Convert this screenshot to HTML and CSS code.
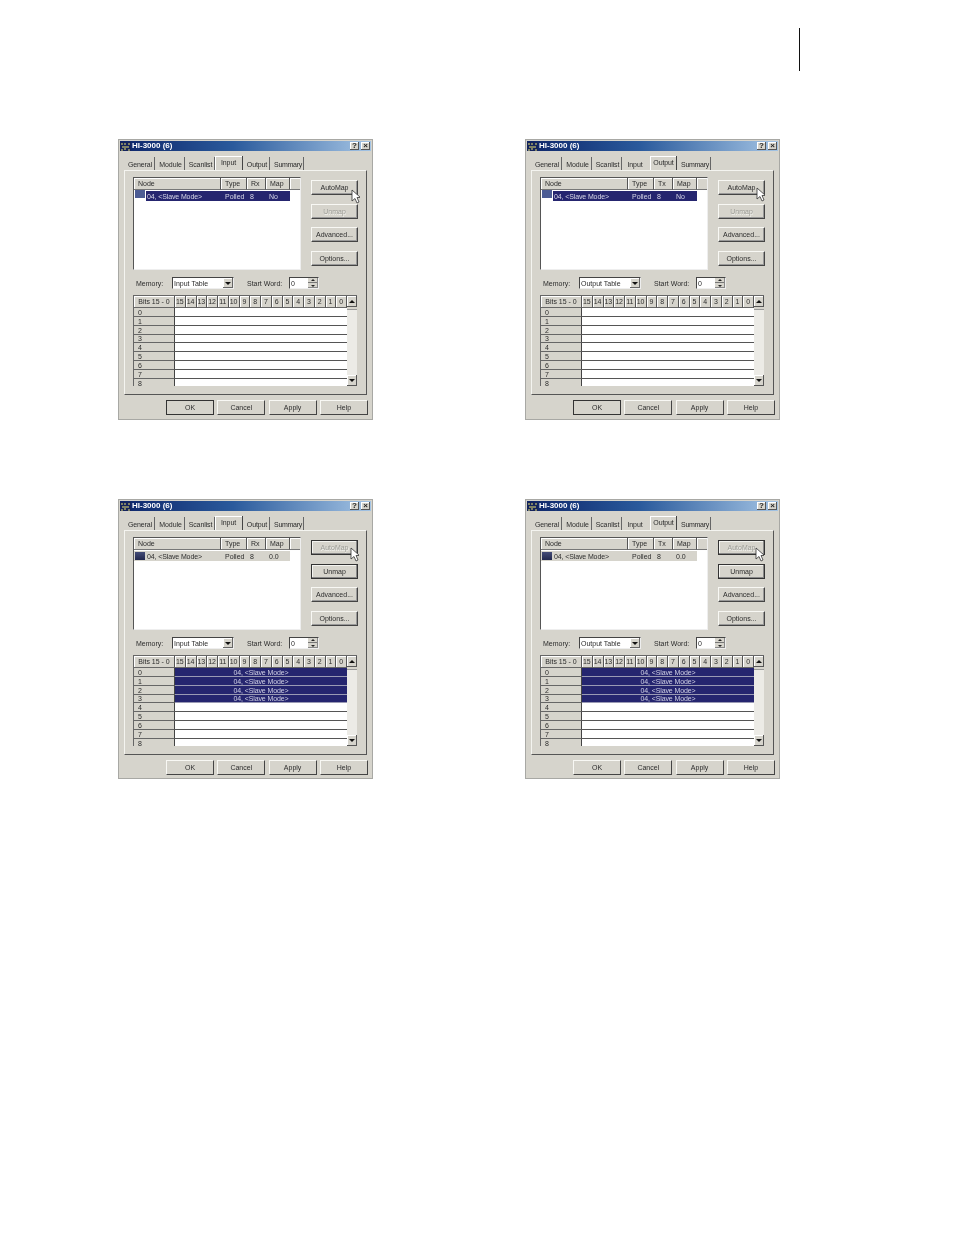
FILE: index.html
```html
<!DOCTYPE html>
<html lang="en">
<head>
<meta charset="utf-8">
<title>HI-3000 dialogs</title>
<link rel="stylesheet" href="styles.css">
</head>
<body>
<header class="topbar"><div class="rule"></div></header>
<main class="sheet">

<section class="dialog">
  <div class="title"><svg class="logo" viewBox="0 0 11 9"><rect width="11" height="9" fill="#14245c"/><path d="M1 2h2M5 1v2M8 2h2M2 5h7M1 8h2M5 6v2M8 8h2" stroke="#e8e070" stroke-width="1"/></svg><span class="title-text">HI-3000 (6)</span><span class="winbtns"><span class="winbtn">?</span><span class="winbtn">×</span></span></div>
  <div class="tabs"><span class="tab t1">General</span><span class="tab t2">Module</span><span class="tab t3">Scanlist</span><span class="tab t4 active">Input</span><span class="tab t5">Output</span><span class="tab t6">Summary</span></div>
  <div class="panel">
    <div class="top">
      <div class="list">
        <div class="lhead"><span class="lh c1">Node</span><span class="lh c2">Type</span><span class="lh c3">Rx</span><span class="lh c4">Map</span><span class="lh c5"></span></div>
        <div class="lrow sel"><span class="licon"></span><span class="lcell c1x">04, &lt;Slave Mode&gt;</span><span class="lcell c2">Polled</span><span class="lcell c3">8</span><span class="lcell c4">No</span></div>
      </div>
      <div class="side"><button class="btn">AutoMap</button><button class="btn off">Unmap</button><button class="btn">Advanced...</button><button class="btn">Options...</button></div>
    </div>
    <div class="mem"><span class="l1">Memory:</span><span class="select"><span class="val">Input Table</span><span class="drop"></span></span><span class="l2">Start Word:</span><span class="spin"><span class="val">0</span><span class="spinb"></span></span></div>
    <div class="bits">
      <div class="table">
        <span class="hc">Bits 15 - 0</span><span class="hb">15</span><span class="hb">14</span><span class="hb">13</span><span class="hb">12</span><span class="hb">11</span><span class="hb">10</span><span class="hb">9</span><span class="hb">8</span><span class="hb">7</span><span class="hb">6</span><span class="hb">5</span><span class="hb">4</span><span class="hb">3</span><span class="hb">2</span><span class="hb">1</span><span class="hb">0</span>
        <span class="rl">0</span><span class="rd"></span><span class="rl">1</span><span class="rd"></span><span class="rl">2</span><span class="rd"></span><span class="rl">3</span><span class="rd"></span><span class="rl">4</span><span class="rd"></span><span class="rl">5</span><span class="rd"></span><span class="rl">6</span><span class="rd"></span><span class="rl">7</span><span class="rd"></span><span class="rl">8</span><span class="rd"></span>
      </div>
      <div class="scroll"><span class="sb up"></span><span class="thumb"></span><span class="track"></span><span class="sb down"></span></div>
    </div>
  </div>
  <div class="actions"><button class="btn act def">OK</button><button class="btn act">Cancel</button><button class="btn act">Apply</button><button class="btn act">Help</button></div>
  <svg class="cursor" viewBox="0 0 9 15"><path d="M1 1v11l3-2.500 2 4.500 2-1-2-4.500h3.500z" fill="#fff" stroke="#333" stroke-width=".8"/></svg>
</section>

<section class="dialog">
  <div class="title"><svg class="logo" viewBox="0 0 11 9"><rect width="11" height="9" fill="#14245c"/><path d="M1 2h2M5 1v2M8 2h2M2 5h7M1 8h2M5 6v2M8 8h2" stroke="#e8e070" stroke-width="1"/></svg><span class="title-text">HI-3000 (6)</span><span class="winbtns"><span class="winbtn">?</span><span class="winbtn">×</span></span></div>
  <div class="tabs"><span class="tab t1">General</span><span class="tab t2">Module</span><span class="tab t3">Scanlist</span><span class="tab t4 plain">Input</span><span class="tab t5 active">Output</span><span class="tab t6">Summary</span></div>
  <div class="panel">
    <div class="top">
      <div class="list">
        <div class="lhead"><span class="lh c1">Node</span><span class="lh c2">Type</span><span class="lh c3">Tx</span><span class="lh c4">Map</span><span class="lh c5"></span></div>
        <div class="lrow sel"><span class="licon"></span><span class="lcell c1x">04, &lt;Slave Mode&gt;</span><span class="lcell c2">Polled</span><span class="lcell c3">8</span><span class="lcell c4">No</span></div>
      </div>
      <div class="side"><button class="btn">AutoMap</button><button class="btn off">Unmap</button><button class="btn">Advanced...</button><button class="btn">Options...</button></div>
    </div>
    <div class="mem"><span class="l1">Memory:</span><span class="select"><span class="val">Output Table</span><span class="drop"></span></span><span class="l2">Start Word:</span><span class="spin"><span class="val">0</span><span class="spinb"></span></span></div>
    <div class="bits">
      <div class="table">
        <span class="hc">Bits 15 - 0</span><span class="hb">15</span><span class="hb">14</span><span class="hb">13</span><span class="hb">12</span><span class="hb">11</span><span class="hb">10</span><span class="hb">9</span><span class="hb">8</span><span class="hb">7</span><span class="hb">6</span><span class="hb">5</span><span class="hb">4</span><span class="hb">3</span><span class="hb">2</span><span class="hb">1</span><span class="hb">0</span>
        <span class="rl">0</span><span class="rd"></span><span class="rl">1</span><span class="rd"></span><span class="rl">2</span><span class="rd"></span><span class="rl">3</span><span class="rd"></span><span class="rl">4</span><span class="rd"></span><span class="rl">5</span><span class="rd"></span><span class="rl">6</span><span class="rd"></span><span class="rl">7</span><span class="rd"></span><span class="rl">8</span><span class="rd"></span>
      </div>
      <div class="scroll"><span class="sb up"></span><span class="thumb"></span><span class="track"></span><span class="sb down"></span></div>
    </div>
  </div>
  <div class="actions"><button class="btn act def">OK</button><button class="btn act">Cancel</button><button class="btn act">Apply</button><button class="btn act">Help</button></div>
  <svg class="cursor right" viewBox="0 0 9 15"><path d="M1 1v11l3-2.500 2 4.500 2-1-2-4.500h3.500z" fill="#fff" stroke="#333" stroke-width=".8"/></svg>
</section>

<section class="dialog short">
  <div class="title"><svg class="logo" viewBox="0 0 11 9"><rect width="11" height="9" fill="#14245c"/><path d="M1 2h2M5 1v2M8 2h2M2 5h7M1 8h2M5 6v2M8 8h2" stroke="#e8e070" stroke-width="1"/></svg><span class="title-text">HI-3000 (6)</span><span class="winbtns"><span class="winbtn">?</span><span class="winbtn">×</span></span></div>
  <div class="tabs"><span class="tab t1">General</span><span class="tab t2">Module</span><span class="tab t3">Scanlist</span><span class="tab t4 active">Input</span><span class="tab t5">Output</span><span class="tab t6">Summary</span></div>
  <div class="panel">
    <div class="top">
      <div class="list">
        <div class="lhead"><span class="lh c1">Node</span><span class="lh c2">Type</span><span class="lh c3">Rx</span><span class="lh c4">Map</span><span class="lh c5"></span></div>
        <div class="lrow mapped"><span class="licon"></span><span class="lcell c1x">04, &lt;Slave Mode&gt;</span><span class="lcell c2">Polled</span><span class="lcell c3">8</span><span class="lcell c4">0.0</span></div>
      </div>
      <div class="side"><button class="btn off focus">AutoMap</button><button class="btn focus">Unmap</button><button class="btn">Advanced...</button><button class="btn">Options...</button></div>
    </div>
    <div class="mem"><span class="l1">Memory:</span><span class="select"><span class="val">Input Table</span><span class="drop"></span></span><span class="l2">Start Word:</span><span class="spin"><span class="val">0</span><span class="spinb"></span></span></div>
    <div class="bits">
      <div class="table">
        <span class="hc">Bits 15 - 0</span><span class="hb">15</span><span class="hb">14</span><span class="hb">13</span><span class="hb">12</span><span class="hb">11</span><span class="hb">10</span><span class="hb">9</span><span class="hb">8</span><span class="hb">7</span><span class="hb">6</span><span class="hb">5</span><span class="hb">4</span><span class="hb">3</span><span class="hb">2</span><span class="hb">1</span><span class="hb">0</span>
        <span class="rl">0</span><span class="rd on">04, &lt;Slave Mode&gt;</span><span class="rl">1</span><span class="rd on">04, &lt;Slave Mode&gt;</span><span class="rl">2</span><span class="rd on">04, &lt;Slave Mode&gt;</span><span class="rl">3</span><span class="rd on">04, &lt;Slave Mode&gt;</span><span class="rl">4</span><span class="rd"></span><span class="rl">5</span><span class="rd"></span><span class="rl">6</span><span class="rd"></span><span class="rl">7</span><span class="rd"></span><span class="rl">8</span><span class="rd"></span>
      </div>
      <div class="scroll"><span class="sb up"></span><span class="thumb"></span><span class="track"></span><span class="sb down"></span></div>
    </div>
  </div>
  <div class="actions"><button class="btn act">OK</button><button class="btn act">Cancel</button><button class="btn act">Apply</button><button class="btn act">Help</button></div>
  <svg class="cursor low" viewBox="0 0 9 15"><path d="M1 1v11l3-2.500 2 4.500 2-1-2-4.500h3.500z" fill="#fff" stroke="#333" stroke-width=".8"/></svg>
</section>

<section class="dialog short">
  <div class="title"><svg class="logo" viewBox="0 0 11 9"><rect width="11" height="9" fill="#14245c"/><path d="M1 2h2M5 1v2M8 2h2M2 5h7M1 8h2M5 6v2M8 8h2" stroke="#e8e070" stroke-width="1"/></svg><span class="title-text">HI-3000 (6)</span><span class="winbtns"><span class="winbtn">?</span><span class="winbtn">×</span></span></div>
  <div class="tabs"><span class="tab t1">General</span><span class="tab t2">Module</span><span class="tab t3">Scanlist</span><span class="tab t4 plain">Input</span><span class="tab t5 active">Output</span><span class="tab t6">Summary</span></div>
  <div class="panel">
    <div class="top">
      <div class="list">
        <div class="lhead"><span class="lh c1">Node</span><span class="lh c2">Type</span><span class="lh c3">Tx</span><span class="lh c4">Map</span><span class="lh c5"></span></div>
        <div class="lrow mapped"><span class="licon"></span><span class="lcell c1x">04, &lt;Slave Mode&gt;</span><span class="lcell c2">Polled</span><span class="lcell c3">8</span><span class="lcell c4">0.0</span></div>
      </div>
      <div class="side"><button class="btn off focus">AutoMap</button><button class="btn focus">Unmap</button><button class="btn">Advanced...</button><button class="btn">Options...</button></div>
    </div>
    <div class="mem"><span class="l1">Memory:</span><span class="select"><span class="val">Output Table</span><span class="drop"></span></span><span class="l2">Start Word:</span><span class="spin"><span class="val">0</span><span class="spinb"></span></span></div>
    <div class="bits">
      <div class="table">
        <span class="hc">Bits 15 - 0</span><span class="hb">15</span><span class="hb">14</span><span class="hb">13</span><span class="hb">12</span><span class="hb">11</span><span class="hb">10</span><span class="hb">9</span><span class="hb">8</span><span class="hb">7</span><span class="hb">6</span><span class="hb">5</span><span class="hb">4</span><span class="hb">3</span><span class="hb">2</span><span class="hb">1</span><span class="hb">0</span>
        <span class="rl">0</span><span class="rd on">04, &lt;Slave Mode&gt;</span><span class="rl">1</span><span class="rd on">04, &lt;Slave Mode&gt;</span><span class="rl">2</span><span class="rd on">04, &lt;Slave Mode&gt;</span><span class="rl">3</span><span class="rd on">04, &lt;Slave Mode&gt;</span><span class="rl">4</span><span class="rd"></span><span class="rl">5</span><span class="rd"></span><span class="rl">6</span><span class="rd"></span><span class="rl">7</span><span class="rd"></span><span class="rl">8</span><span class="rd"></span>
      </div>
      <div class="scroll"><span class="sb up"></span><span class="thumb"></span><span class="track"></span><span class="sb down"></span></div>
    </div>
  </div>
  <div class="actions"><button class="btn act">OK</button><button class="btn act">Cancel</button><button class="btn act">Apply</button><button class="btn act">Help</button></div>
  <svg class="cursor low right" viewBox="0 0 9 15"><path d="M1 1v11l3-2.500 2 4.500 2-1-2-4.500h3.500z" fill="#fff" stroke="#333" stroke-width=".8"/></svg>
</section>

</main>
</body>
</html>
```

FILE: styles.css
```css
* { box-sizing: border-box; }
html, body { margin: 0; background: #fff; }
body { width: 954px; height: 1235px; overflow: hidden; font: 7px/1 "Liberation Sans", Arial, sans-serif; color: #2c2c2c; }

.topbar { height: 71px; padding: 28px 0 0 799px; }
.rule { width: 1px; height: 43px; background: #111; }

.sheet { display: grid; grid-template-columns: 255px 255px; column-gap: 152px; row-gap: 79px; padding: 68px 0 0 118px; align-items: start; }

.dialog { position: relative; width: 255px; height: 281px; background: #d6d4cc; padding: 2px 2px 0; box-shadow: inset 0 0 0 1px #a8a8a4; filter: blur(.45px); }
.dialog.short { height: 280px; }

.title { display: flex; align-items: center; height: 10px; background: linear-gradient(90deg, #0c2468 0%, #2a5a9c 45%, #a4c4e4 100%); color: #fff; }
.logo { width: 11px; height: 9px; flex: none; }
.title-text { margin-left: 1px; font-size: 8px; font-weight: 700; }
.winbtns { display: flex; gap: 2px; margin-left: auto; margin-right: 1px; }
.winbtn { width: 9px; height: 8px; background: #d6d4cc; color: #222; font-size: 8px; line-height: 8px; font-weight: 700; text-align: center; box-shadow: inset -1px -1px 0 #555, inset 1px 1px 0 #fff; }

.tabs { display: flex; height: 13px; margin: 6px 0 0 4px; letter-spacing: -.1px; }
.tab { display: flex; align-items: center; justify-content: center; height: 13px; padding: 1px 0 0 2px; border-right: 1px solid #666; }
.t1 { width: 31px; }
.t2 { width: 30px; }
.t3 { width: 30px; }
.t4 { width: 28px; }
.t5 { width: 27px; }
.t6 { width: 34px; padding-left: 3px; letter-spacing: -.3px; }
.tab.plain { border-right: 0; padding: 1px 2px 0 0; }
.tab.t4.active { padding: 0 0 1px; }
.tab.active { height: 14px; margin-top: -1px; padding: 0 0 1px 1px; background: #d6d4cc; box-shadow: inset 1px 1px 0 #fff; position: relative; z-index: 1; border-right: 1px solid #444; }

.panel { width: 243px; height: 225px; margin-left: 4px; padding: 6px 0 0 8px; border-top: 1px solid #f4f4f0; border-left: 1px solid #f4f4f0; border-right: 1px solid #555; border-bottom: 1px solid #555; }

.top { display: flex; gap: 10px; }
.list { width: 168px; height: 93px; background: #fff; border-top: 1px solid #555; border-left: 1px solid #555; border-right: 1px solid #eee; border-bottom: 1px solid #eee; }
.lhead { display: flex; height: 12px; background: #d6d4cc; }
.lh { display: flex; align-items: center; padding-left: 4px; border-right: 1px solid #555; border-bottom: 1px solid #777; box-shadow: inset 1px 1px 0 #fff; }
.c1 { width: 87px; }
.c2 { width: 26px; }
.c3 { width: 19px; }
.c4 { width: 24px; }
.c5 { width: 10px; border-right: 0; }
.lrow { display: flex; align-items: center; height: 10px; margin-top: 1px; width: 156px; }
.licon { width: 10px; height: 8px; margin: 0 1px 0 1px; flex: none; background: linear-gradient(#444c78, #22284e); }
.lcell { display: block; padding-left: 4px; }
.c1x { width: 75px; padding-left: 1px; letter-spacing: -.12px; }
.lrow .c2 { width: 26px; }
.lrow .c3 { width: 19px; padding-left: 3px; }
.lrow .c4 { width: 24px; padding-left: 3px; }
.lrow.sel { background: linear-gradient(90deg, #fff 12px, #25256f 12px); color: #d8d8e8; }
.lrow.sel .licon { background: #4c5c94; margin-top: -4px; }
.lrow.mapped { background: #d6d4cc; }

.side { display: flex; flex-direction: column; gap: 8.7px; padding-top: 3px; width: 47px; }
.btn { display: block; width: 47px; height: 15px; padding: 0; font: 7px/1 "Liberation Sans", Arial, sans-serif; color: #2c2c2c; background: #d6d4cc; border: 0; border-top: 1px solid #f8f8f4; border-left: 1px solid #f8f8f4; border-right: 1px solid #444; border-bottom: 1px solid #444; box-shadow: inset -1px -1px 0 #999; }
.btn.off { color: #9a9a94; text-shadow: .5px .5px 0 #f4f4f0; }
.btn.focus { border: 1px solid #333; box-shadow: inset -1px -1px 0 #888, inset 1px 1px 0 #f4f4f0; }

.mem { display: flex; align-items: center; height: 12px; margin-top: 7px; padding-left: 3px; }
.l1 { width: 36px; }
.l2 { width: 42px; margin-left: 13px; }
.select, .spin { display: flex; align-items: center; height: 12px; background: #fff; border-top: 1px solid #444; border-left: 1px solid #444; border-right: 1px solid #eee; border-bottom: 1px solid #eee; }
.select { width: 62px; }
.spin { width: 30px; }
.val { padding-left: 1px; flex: 1; }
.drop { position: relative; width: 10px; height: 10px; background: #d6d4cc; box-shadow: inset -1px -1px 0 #666, inset 1px 1px 0 #fff; }
.drop::after { content: ""; position: absolute; left: 2px; top: 4px; border: 3px solid transparent; border-top: 3px solid #111; border-bottom: 0; }
.spinb { position: relative; width: 10px; height: 10px; background: linear-gradient(#d6d4cc 45%, #777 45%, #777 55%, #d6d4cc 55%); box-shadow: inset -1px -1px 0 #888; }
.spinb::before { content: ""; position: absolute; left: 3px; top: 1px; border: 2px solid transparent; border-bottom: 2px solid #222; border-top: 0; }
.spinb::after { content: ""; position: absolute; left: 3px; top: 7px; border: 2px solid transparent; border-top: 2px solid #222; border-bottom: 0; }

.bits { display: flex; width: 224px; height: 91px; margin-top: 6px; border-top: 1px solid #666; border-left: 1px solid #666; }
.table { display: grid; grid-template-columns: 41px repeat(16, 10.75px); grid-template-rows: 12px repeat(9, 8.85px); width: 213px; height: 90px; overflow: hidden; background: #fff; }
.hc, .hb { display: flex; align-items: center; justify-content: center; background: #d6d4cc; border-right: 1px solid #555; border-bottom: 1px solid #666; box-shadow: inset 1px 1px 0 #fff; }
.rl { display: flex; align-items: center; padding: 1px 0 0 4px; background: #d6d4cc; border-right: 1px solid #444; border-bottom: 1px solid #666; }
.rd { grid-column: 2 / 18; display: flex; align-items: center; justify-content: center; padding-top: 1px; background: #fff; border-bottom: 1px solid #555; letter-spacing: -.12px; }
.rd.on { background: #25256f; color: #d0d0e4; border-bottom: 1px solid #9a9ab4; }

.scroll { display: flex; flex-direction: column; width: 10px; height: 90px; background: #ecebe6; }
.sb { position: relative; flex: none; width: 10px; height: 11px; background: #d6d4cc; box-shadow: inset -1px -1px 0 #555, inset 1px 1px 0 #fff; }
.sb.up::after { content: ""; position: absolute; left: 2px; top: 4px; border: 3px solid transparent; border-bottom: 3px solid #111; border-top: 0; }
.sb.down::after { content: ""; position: absolute; left: 2px; top: 4px; border: 3px solid transparent; border-top: 3px solid #111; border-bottom: 0; }
.thumb { flex: none; height: 3px; background: #d6d4cc; box-shadow: inset 0 -1px 0 #999; }
.track { flex: 1; }

.actions { display: flex; gap: 3.3px; margin: 5px 0 0 46px; }
.btn.act { width: 48px; height: 15px; border-top-color: #f8f8f4; box-shadow: none; }
.btn.act.def { border: 1px solid #333; }

.cursor { position: absolute; left: 233px; top: 50px; width: 9px; height: 15px; }
.cursor.right { left: 231px; top: 48px; }
.cursor.low { left: 232px; top: 48px; }
.cursor.low.right { left: 230px; }
```
